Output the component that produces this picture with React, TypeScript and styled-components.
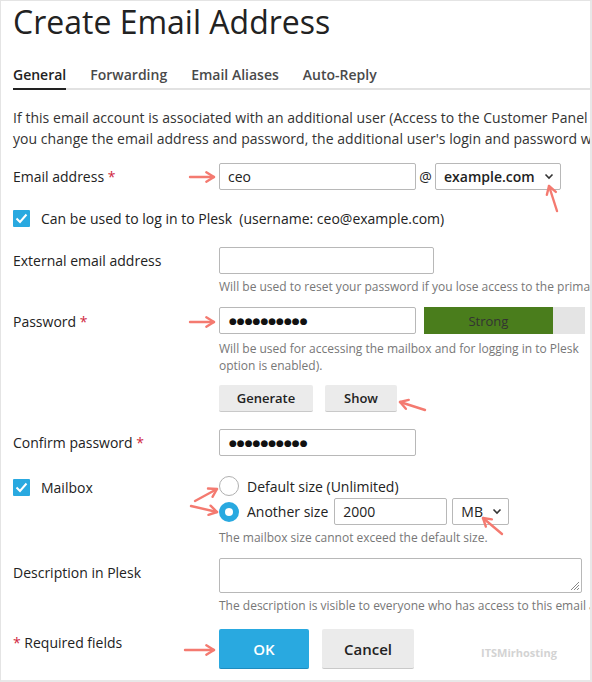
import React from "react";
import styled, { createGlobalStyle } from "styled-components";

const Global = createGlobalStyle`
  html, body { margin: 0; padding: 0; background: #fff; }
  body { font-family: "Open Sans", "Noto Sans", Arial, sans-serif; color: #222; }
  * { box-sizing: border-box; }
`;

const Frame = styled.div`
  position: relative;
  width: 592px;
  height: 682px;
  border-left: 1px solid #e4e4e4;
  border-top: 1px solid #e4e4e4;
  border-right: 2px solid #e8e8e8;
  border-bottom: 2px solid #e8e8e8;
  overflow: hidden;
  padding-left: 12px;
`;

const Title = styled.h1`
  margin: 0;
  padding-top: 1px;
  font-size: 32px;
  font-weight: 400;
  line-height: 40px;
  color: #222;
  white-space: nowrap;
`;

const Tabs = styled.div`
  display: flex;
  gap: 24px;
  margin-top: 23px;
  border-bottom: 2px solid #e2e2e2;
`;

const Tab = styled.div<{ $active?: boolean }>`
  font-size: 14px;
  font-weight: 600;
  line-height: 20px;
  color: ${(p) => (p.$active ? "#222" : "#4a4a4a")};
  padding-bottom: 3px;
  margin-bottom: -2px;
  border-bottom: 2px solid ${(p) => (p.$active ? "#222" : "transparent")};
`;

const Intro = styled.div`
  margin-top: 17px;
  font-size: 14px;
  line-height: 21px;
  letter-spacing: 0.04px;
  color: #333;
  white-space: nowrap;
`;

const Line = styled.div``;

const Row = styled.div<{ $mt: number }>`
  display: grid;
  grid-template-columns: 206px 1fr;
  align-items: start;
  margin-top: ${(p) => p.$mt}px;
`;

const Label = styled.div<{ $lh?: number }>`
  font-size: 14px;
  line-height: ${(p) => p.$lh ?? 27}px;
  color: #222;
  white-space: nowrap;
`;

const Req = styled.span`
  color: #d0273e;
`;

const Field = styled.div`
  display: flex;
  flex-direction: column;
  min-width: 0;
`;

const Inline = styled.div<{ $gap?: number }>`
  display: flex;
  align-items: center;
  gap: ${(p) => p.$gap ?? 0}px;
`;

const TextInput = styled.input<{ $w: number }>`
  width: ${(p) => p.$w}px;
  height: 27px;
  border: 1px solid #b8b8b8;
  border-radius: 2px;
  padding: 0 8px;
  font-family: inherit;
  font-size: 14px;
  color: #222;
  background: #fff;
  outline: none;
`;

const Dots = styled.div<{ $w: number }>`
  width: ${(p) => p.$w}px;
  height: 27px;
  border: 1px solid #b8b8b8;
  border-radius: 2px;
  padding: 0 0 0 9px;
  display: flex;
  align-items: center;
  font-family: "DejaVu Sans", sans-serif;
  font-size: 9px;
  letter-spacing: 0;
  color: #111;
`;

const At = styled.span`
  font-size: 14px;
  width: 19px;
  text-align: center;
  color: #222;
`;

const Select = styled.div<{ $w: number; $ml?: number; $bold?: boolean }>`
  width: ${(p) => p.$w}px;
  height: 27px;
  margin-left: ${(p) => p.$ml ?? 0}px;
  border: 1px solid #b8b8b8;
  border-radius: 2px;
  padding: 0 6px 0 8px;
  display: flex;
  align-items: center;
  justify-content: space-between;
  font-size: 14px;
  font-weight: ${(p) => (p.$bold ? 600 : 400)};
  color: #222;
`;

const Hint = styled.div<{ $mt?: number; $lh?: number }>`
  margin-top: ${(p) => p.$mt ?? 5}px;
  font-size: 12px;
  line-height: ${(p) => p.$lh ?? 16}px;
  color: #777;
  white-space: nowrap;
`;

const Strength = styled.div`
  width: 161px;
  height: 27px;
  margin-left: 8px;
  background: #e4e4e4;
  display: flex;
`;

const StrengthFill = styled.div`
  background: #4a7d1c;
  color: #333;
  font-size: 13px;
  display: flex;
  align-items: center;
  justify-content: center;
`;

const Btn = styled.button<{ $w: number; $h?: number; $primary?: boolean }>`
  width: ${(p) => p.$w}px;
  height: ${(p) => p.$h ?? 27}px;
  border: none;
  border-bottom: 1px solid ${(p) => (p.$primary ? "#1d8cbf" : "#c9c9c9")};
  border-radius: 2px;
  background: ${(p) => (p.$primary ? "#29a9e0" : "#ebebeb")};
  color: ${(p) => (p.$primary ? "#fff" : "#222")};
  font-family: inherit;
  font-size: ${(p) => (p.$h ? 15 : 13)}px;
  font-weight: 600;
  padding: 0;
`;

const Check = styled.span`
  width: 17px;
  height: 17px;
  border-radius: 1px;
  background: #29a9e0;
  display: inline-flex;
  align-items: center;
  justify-content: center;
  flex: none;
`;

const CheckRow = styled.div<{ $mt: number }>`
  display: flex;
  align-items: center;
  gap: 11px;
  margin-top: ${(p) => p.$mt}px;
  font-size: 14px;
  line-height: 17px;
  color: #222;
  white-space: pre;
`;

const Radio = styled.span<{ $on?: boolean }>`
  width: 20px;
  height: 20px;
  border-radius: 50%;
  flex: none;
  border: ${(p) => (p.$on ? "none" : "1px solid #b0b0b0")};
  background: ${(p) => (p.$on ? "#29a9e0" : "#fff")};
  display: inline-flex;
  align-items: center;
  justify-content: center;
  &::after {
    content: "";
    display: ${(p) => (p.$on ? "block" : "none")};
    width: 8px;
    height: 8px;
    border-radius: 50%;
    background: #fff;
  }
`;

const RadioLine = styled.div<{ $h: number; $mt?: number }>`
  display: flex;
  align-items: center;
  height: ${(p) => p.$h}px;
  margin-top: ${(p) => p.$mt ?? 0}px;
  font-size: 14px;
  color: #222;
  white-space: nowrap;
`;

const RadioText = styled.span`
  margin-left: 8px;
  margin-right: 6px;
`;

const TextArea = styled.div`
  position: relative;
  width: 363px;
  height: 35px;
  border: 1px solid #b8b8b8;
  border-radius: 2px;
`;

const Grip = styled.svg`
  position: absolute;
  right: 1px;
  bottom: 1px;
`;

const Watermark = styled.span`
  margin-left: 54px;
  font-size: 11px;
  font-weight: 700;
  color: #d3d3d3;
  align-self: center;
  margin-top: 6px;
`;

const Overlay = styled.svg`
  position: absolute;
  left: -1px;
  top: -1px;
  pointer-events: none;
`;

const Chevron = () => (
  <svg width="10" height="7" viewBox="0 0 10 7">
    <path d="M1.5 1.5 L5 5 L8.5 1.5" fill="none" stroke="#333" strokeWidth="1.6" />
  </svg>
);

const Tick = () => (
  <svg width="13" height="11" viewBox="0 0 13 11">
    <path d="M1.5 5.5 L5 9 L11.5 1.5" fill="none" stroke="#fff" strokeWidth="2" />
  </svg>
);

type Arrow = [number, number, number, number];
const arrows: Arrow[] = [
  [190, 177, 214, 177],
  [557, 211, 549, 186],
  [190, 322, 214, 322],
  [425, 410, 400, 402],
  [195, 501, 217, 489],
  [191, 506, 217, 512],
  [502, 534, 483, 518],
  [185, 650, 214, 650],
];

const ArrowShape = ({ a }: { a: Arrow }) => {
  const [x1, y1, x2, y2] = a;
  const ang = Math.atan2(y2 - y1, x2 - x1);
  const len = 9;
  const h1x = x2 - len * Math.cos(ang - 0.55);
  const h1y = y2 - len * Math.sin(ang - 0.55);
  const h2x = x2 - len * Math.cos(ang + 0.55);
  const h2y = y2 - len * Math.sin(ang + 0.55);
  return (
    <g stroke="#f47a70" strokeWidth="2.4" strokeLinecap="round" strokeLinejoin="round" fill="none">
      <line x1={x1} y1={y1} x2={x2} y2={y2} />
      <polyline points={`${h1x},${h1y} ${x2},${y2} ${h2x},${h2y}`} />
    </g>
  );
};

export default function App() {
  return (
    <>
      <Global />
      <Frame>
        <Title>Create Email Address</Title>
        <Tabs>
          <Tab $active>General</Tab>
          <Tab>Forwarding</Tab>
          <Tab>Email Aliases</Tab>
          <Tab>Auto-Reply</Tab>
        </Tabs>
        <Intro>
          <Line>If this email account is associated with an additional user (Access to the Customer Panel is enabled), then after</Line>
          <Line>you change the email address and password, the additional user's login and password will be changed too.</Line>
        </Intro>

        <Row $mt={14}>
          <Label>
            Email address <Req>*</Req>
          </Label>
          <Inline>
            <TextInput $w={197} defaultValue="ceo" readOnly />
            <At>@</At>
            <Select $w={126} $bold>
              example.com
              <Chevron />
            </Select>
          </Inline>
        </Row>

        <CheckRow $mt={20}>
          <Check>
            <Tick />
          </Check>
          Can be used to log in to Plesk  (username: ceo@example.com)
        </CheckRow>

        <Row $mt={20}>
          <Label>External email address</Label>
          <Field>
            <TextInput $w={215} readOnly />
            <Hint>Will be used to reset your password if you lose access to the primary email address.</Hint>
          </Field>
        </Row>

        <Row $mt={12}>
          <Label $lh={30}>
            Password <Req>*</Req>
          </Label>
          <Field>
            <Inline>
              <Dots $w={197}>●●●●●●●●●●</Dots>
              <Strength>
                <StrengthFill style={{ width: "80%" }}>Strong</StrengthFill>
              </Strength>
            </Inline>
            <Hint $mt={6} $lh={17}>
              Will be used for accessing the mailbox and for logging in to Plesk
              <br />
              option is enabled).
            </Hint>
            <Inline $gap={12} style={{ marginTop: 11 }}>
              <Btn $w={94}>Generate</Btn>
              <Btn $w={72}>Show</Btn>
            </Inline>
          </Field>
        </Row>

        <Row $mt={17}>
          <Label>
            Confirm password <Req>*</Req>
          </Label>
          <Dots $w={197}>●●●●●●●●●●</Dots>
        </Row>

        <Row $mt={20}>
          <CheckRow $mt={3}>
            <Check>
              <Tick />
            </Check>
            Mailbox
          </CheckRow>
          <Field>
            <RadioLine $h={20}>
              <Radio />
              <RadioText>Default size (Unlimited)</RadioText>
            </RadioLine>
            <RadioLine $h={27} $mt={2}>
              <Radio $on />
              <RadioText>Another size</RadioText>
              <TextInput $w={113} defaultValue="2000" readOnly />
              <Select $w={57} $ml={5}>
                MB
                <Chevron />
              </Select>
            </RadioLine>
            <Hint>The mailbox size cannot exceed the default size.</Hint>
          </Field>
        </Row>

        <Row $mt={12}>
          <Label $lh={30}>Description in Plesk</Label>
          <Field>
            <TextArea>
              <Grip width="11" height="11" viewBox="0 0 11 11">
                <path d="M10 2 L2 10 M10 5 L5 10 M10 8 L8 10" stroke="#888" strokeWidth="1" />
              </Grip>
            </TextArea>
            <Hint>The description is visible to everyone who has access to this email account.</Hint>
          </Field>
        </Row>

        <Row $mt={15}>
          <Label $lh={28}>
            <Req>*</Req> Required fields
          </Label>
          <Inline $gap={13}>
            <Btn $w={90} $h={40} $primary>
              OK
            </Btn>
            <Btn $w={92} $h={40}>
              Cancel
            </Btn>
            <Watermark>ITSMirhosting</Watermark>
          </Inline>
        </Row>

        <Overlay width="592" height="682" viewBox="0 0 592 682">
          {arrows.map((a, i) => (
            <ArrowShape key={i} a={a} />
          ))}
        </Overlay>
      </Frame>
    </>
  );
}
